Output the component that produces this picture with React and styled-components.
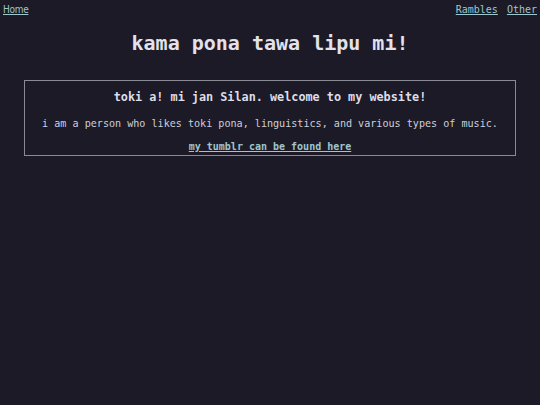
import React from 'react';
import styled, {createGlobalStyle} from 'styled-components';

const GlobalStyle = createGlobalStyle`
	html, body {
		margin: 0;
		padding: 0;
		background: #1b1a26;
		color: #dedde8;
		font-family: "DejaVu Sans Mono", "Liberation Mono", monospace;
	}
`;

function App() {
	return (
		<>
			<GlobalStyle />
			<Page>
				<Nav>
					<HomeLink href="#">Home</HomeLink>
					<NavRight>
						<NavLink href="#">Rambles</NavLink>
						<NavLink href="#">Other</NavLink>
					</NavRight>
				</Nav>
				<Title>kama pona tawa lipu mi!</Title>
				<Box>
					<BoxHeading>toki a! mi jan Silan. welcome to my website!</BoxHeading>
					<BoxText>i am a person who likes toki pona, linguistics, and various types of music.</BoxText>
					<BoxLink href="#">my tumblr can be found here</BoxLink>
				</Box>
			</Page>
		</>
	)
}

const Page = styled.div`
	min-height: 405px;
	display: flex;
	flex-direction: column;
`;

const Nav = styled.nav`
	display: flex;
	justify-content: space-between;
	align-items: center;
	padding: 3px 3px 0 3px;
	height: 14px;
`;

const NavRight = styled.div`
	display: flex;
	gap: 9px;
`;

const linkColor = '#9fc6cc';

const HomeLink = styled.a`
	color: ${linkColor};
	font-family: "DejaVu Sans Condensed", "DejaVu Sans", sans-serif;
	font-size: 10px;
	line-height: 14px;
	letter-spacing: -0.3px;
`;

const NavLink = styled.a`
	color: ${linkColor};
	font-size: 10px;
	line-height: 14px;
`;

const Title = styled.h1`
	margin: 14px 0 0 0;
	text-align: center;
	font-size: 20px;
	line-height: 24px;
	font-weight: bold;
	color: #e2e1ec;
`;

const Box = styled.section`
	margin: 25px 24px 0 24px;
	border: 1px solid #8a8a94;
	padding: 8px 8px 1px 8px;
	display: flex;
	flex-direction: column;
	align-items: center;
`;

const BoxHeading = styled.h2`
	margin: 0;
	font-size: 11.8px;
	line-height: 16px;
	font-weight: bold;
`;

const BoxText = styled.p`
	margin: 12px 0 0 0;
	font-size: 10.1px;
	line-height: 14px;
	color: #cfcedb;
`;

const BoxLink = styled.a`
	margin-top: 9px;
	font-size: 10px;
	line-height: 14px;
	font-weight: bold;
	color: ${linkColor};
`;

export default App
